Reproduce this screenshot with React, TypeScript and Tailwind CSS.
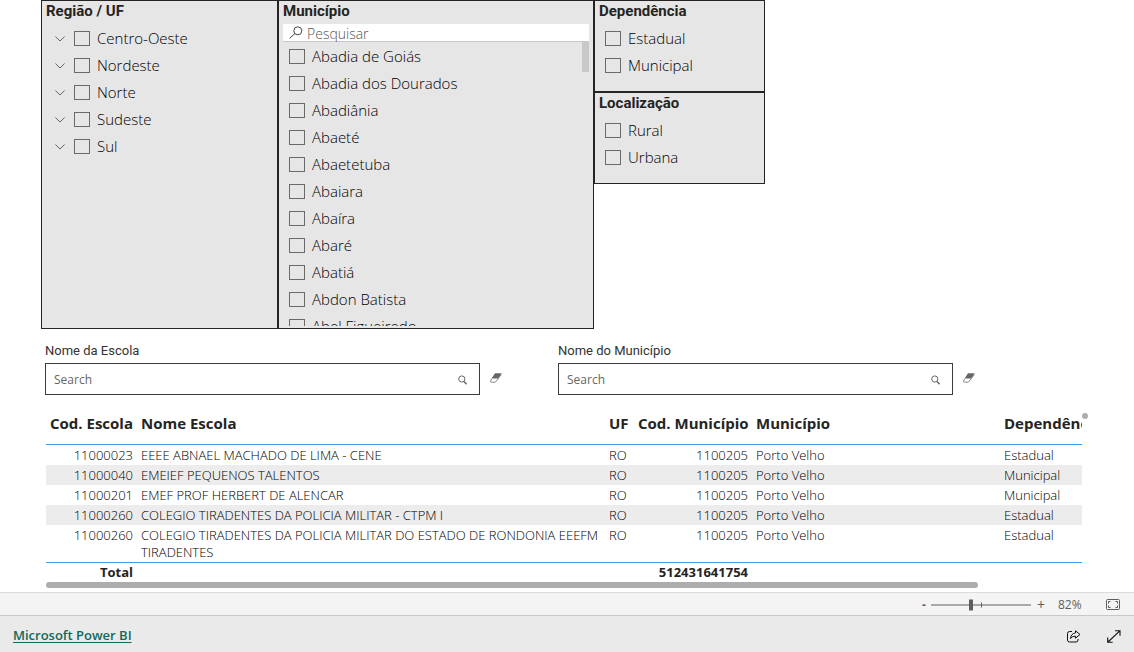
import React, { useState } from "react";

const regions = ["Centro-Oeste", "Nordeste", "Norte", "Sudeste", "Sul"];
const cities = [
  "Abadia de Goiás",
  "Abadia dos Dourados",
  "Abadiânia",
  "Abaeté",
  "Abaetetuba",
  "Abaiara",
  "Abaíra",
  "Abaré",
  "Abatiá",
  "Abdon Batista",
  "Abel Figueiredo",
];

const rows = [
  ["11000023", "EEEE ABNAEL MACHADO DE LIMA - CENE", "RO", "1100205", "Porto Velho", "Estadual"],
  ["11000040", "EMEIEF PEQUENOS TALENTOS", "RO", "1100205", "Porto Velho", "Municipal"],
  ["11000201", "EMEF PROF HERBERT DE ALENCAR", "RO", "1100205", "Porto Velho", "Municipal"],
  ["11000260", "COLEGIO TIRADENTES DA POLICIA MILITAR - CTPM I", "RO", "1100205", "Porto Velho", "Estadual"],
  [
    "11000260",
    "COLEGIO TIRADENTES DA POLICIA MILITAR DO ESTADO DE RONDONIA EEEFM TIRADENTES",
    "RO",
    "1100205",
    "Porto Velho",
    "Estadual",
  ],
];

function Option({ label }: { label: string }) {
  return (
    <label className="flex h-[27px] items-center gap-[7px] text-[15px] font-[350] whitespace-nowrap text-black">
      <input
        type="checkbox"
        className="h-[15px] w-4 shrink-0 appearance-none border border-[#6b6a69] checked:bg-[#252423]"
      />
      <span>{label}</span>
    </label>
  );
}

function Panel({ title, className, children }: { title: string; className: string; children: React.ReactNode }) {
  return (
    <section className={`flex flex-col border border-[#252423] bg-[#e6e6e6] px-1 ${className}`}>
      <h2 className="h-[23px] font-['Roboto',sans-serif] text-[15px] leading-5 font-bold text-[#252423]">{title}</h2>
      {children}
    </section>
  );
}

function SearchBox({ id, label, className }: { id: string; label: string; className: string }) {
  const [value, setValue] = useState("");
  return (
    <div className={className}>
      <label htmlFor={id} className="block h-5 font-['Roboto',sans-serif] text-[13px] leading-4 text-[#333]">
        {label}
      </label>
      <div className="flex items-center gap-2.5">
        <div className="flex h-8 flex-1 items-center border border-[#3c3c3c] pt-px pr-3 pl-2">
          <input
            id={id}
            placeholder="Search"
            value={value}
            onChange={(e) => setValue(e.target.value)}
            className="min-w-0 flex-1 text-xs outline-none placeholder:text-[#666]"
          />
          <button type="button" aria-label={`Search ${label}`}>
            <svg width="9" height="10" viewBox="0 0 9 10" fill="none" stroke="#666" strokeWidth="1">
              <circle cx="3.8" cy="4" r="3.1" />
              <path d="M6 6.4 8.6 9.2" strokeWidth="1.4" />
            </svg>
          </button>
        </div>
        <button type="button" aria-label={`Clear ${label}`} className="pb-0.5">
          <svg width="12" height="10" viewBox="0 0 12 10">
            <path d="M5 .3h6.6L8.2 5.6H1.6z" fill="#666" />
            <path d="M1.6 5.8.6 8.2q-.2 1 .9 1h3.8l2.9-3.4 3.2-4.6" fill="none" stroke="#777" strokeWidth=".9" />
          </svg>
        </button>
      </div>
    </div>
  );
}

export default function App() {
  const [zoom, setZoom] = useState(82);
  return (
    <div className="flex min-h-screen flex-col bg-white font-['Open_Sans',sans-serif] text-[#252423]">
      <main className="flex-1">
        <div className="flex items-start pl-[41px]">
          <Panel title="Região / UF" className="min-h-[329px] w-[237px] self-stretch">
            <ul className="pt-px pl-[9px]">
              {regions.map((r) => (
                <li key={r} className="flex items-center gap-[9px]">
                  <button type="button" aria-label={`Expandir ${r}`}>
                    <svg width="10" height="6" viewBox="0 0 10 6" fill="none" stroke="#666" strokeWidth="1">
                      <path d="M.4.5 5 5 9.6.5" />
                    </svg>
                  </button>
                  <Option label={r} />
                </li>
              ))}
            </ul>
          </Panel>

          <Panel title="Município" className="w-[316px]">
            <div className="flex h-[18px] items-center gap-1 border-b border-[#c8c8c8] bg-white pl-1.5">
              <svg width="14" height="13" viewBox="0 0 14 13" fill="none" stroke="#444" strokeWidth="1">
                <circle cx="8.8" cy="4.8" r="4" />
                <path d="M5.8 7.6.6 12.4" />
              </svg>
              <input
                aria-label="Pesquisar"
                placeholder="Pesquisar"
                className="h-[18px] min-w-0 flex-1 pt-0.5 text-sm leading-4 font-[350] outline-none placeholder:text-[#555]"
              />
            </div>
            <div className="flex items-start pb-0.5">
              <ul className="h-[284px] flex-1 overflow-hidden pt-px pl-1.5">
                {cities.map((c) => (
                  <li key={c}>
                    <Option label={c} />
                  </li>
                ))}
              </ul>
              <div className="h-[30px] w-[7px] bg-[#c8c8c8]" />
            </div>
          </Panel>

          <div className="w-[171px]">
            <Panel title="Dependência" className="min-h-[92px]">
              <div className="pt-px pl-1.5">
                <Option label="Estadual" />
                <Option label="Municipal" />
              </div>
            </Panel>
            <Panel title="Localização" className="min-h-[92px]">
              <div className="pt-px pl-1.5">
                <Option label="Rural" />
                <Option label="Urbana" />
              </div>
            </Panel>
          </div>
        </div>

        <div className="flex gap-14 pt-3.5 pl-[45px]">
          <SearchBox id="escola" label="Nome da Escola" className="w-[457px]" />
          <SearchBox id="municipio" label="Nome do Município" className="w-[417px]" />
        </div>

        <div className="relative mt-2 mr-[52px] ml-[46px]">
          <div className="overflow-hidden">
            <table className="w-[1120px] table-fixed border-collapse text-[13px] leading-[17px]">
              <colgroup>
                <col className="w-[91px]" />
                <col className="w-[468px]" />
                <col className="w-[29px]" />
                <col className="w-[118px]" />
                <col className="w-[248px]" />
                <col className="w-[166px]" />
              </colgroup>
              <thead>
                <tr className="h-[41px] border-b border-[#3d9be9] text-left text-[15px] whitespace-nowrap">
                  <th className="px-1 text-right font-bold">Cod. Escola</th>
                  <th className="px-1 font-bold">Nome Escola</th>
                  <th className="px-1 font-bold">UF</th>
                  <th className="px-1 text-right font-bold">Cod. Município</th>
                  <th className="px-1 font-bold">Município</th>
                  <th className="px-1 font-bold">Dependência</th>
                </tr>
              </thead>
              <tbody className="font-[350] text-black">
                {rows.map((r, i) => (
                  <tr key={i} className="align-top even:bg-[#ececec]">
                    {r.map((c, j) => (
                      <td key={j} className={`pt-0.5 pb-px pl-1 ${j === 1 ? "" : "pr-1"} ${j === 0 || j === 3 ? "text-right" : ""}`}>
                        {c}
                      </td>
                    ))}
                  </tr>
                ))}
              </tbody>
              <tfoot>
                <tr className="border-t border-[#3d9be9] font-bold">
                  <td className="px-1 py-px text-right">Total</td>
                  <td />
                  <td />
                  <td className="px-1 py-px text-right">512431641754</td>
                  <td />
                  <td />
                </tr>
              </tfoot>
            </table>
          </div>
          <div className="h-1.5 w-[90%] rounded-full bg-[#adadad]" />
          <div className="absolute top-2.5 -right-1.5 size-1.5 rounded-full bg-[#adadad]" />
        </div>
      </main>

      <div className="flex h-[23px] items-center justify-end border-t border-[#dcdcdc] bg-[#f4f4f4] pt-px pr-3.5 text-xs text-[#605e5c]">
        <button type="button" aria-label="Diminuir zoom" className="w-3 text-left font-bold" onClick={() => setZoom(zoom - 1)}>
          -
        </button>
        <svg width="100" height="12" viewBox="0 0 100 12" fill="#605e5c" className="ml-[-3px]">
          <path d="M0 5.5h100v1H0zM38 .5h4v11h-4zM50 3.5h1v5h-1z" />
        </svg>
        <button type="button" aria-label="Aumentar zoom" className="w-5 text-center text-sm" onClick={() => setZoom(zoom + 1)}>
          +
        </button>
        <span className="ml-[7px] w-12">{zoom}%</span>
        <button type="button" aria-label="Ajustar à página">
          <svg width="14" height="11" viewBox="0 0 14 11" fill="none" stroke="#605e5c">
            <rect x=".5" y=".5" width="13" height="10" rx="1" />
            <path d="M4.5 2.5h-2v2M9.5 2.5h2v2M2.5 6.5v2h2M11.5 6.5v2h-2" />
          </svg>
        </button>
      </div>

      <footer className="flex h-[37px] items-center justify-between border-t border-[#c8c8c8] bg-[#eaeaea] pt-1 pr-[13px] pl-[13px]">
        <a href="#powerbi" className="text-[13px] font-semibold text-[#11695a] underline underline-offset-2">
          Microsoft Power BI
        </a>
        <div className="flex items-center gap-[26px]">
          <button type="button" aria-label="Compartilhar">
            <svg width="14" height="13" viewBox="0 0 14 13" fill="none" stroke="#111" strokeLinejoin="round">
              <path d="M5 1.5H2.5a2 2 0 0 0-2 2v6.5a2 2 0 0 0 2 2H9a2 2 0 0 0 2-2V9" />
              <path d="M8.5.8 13 4.5 8.5 8.2V6.2Q5.2 6 3.5 8.5 4 3.5 8.5 2.9z" />
            </svg>
          </button>
          <button type="button" aria-label="Tela cheia">
            <svg width="14" height="13" viewBox="0 0 14 13" fill="none" stroke="#111" strokeWidth="1.1">
              <path d="M1 12 12.8.8M8 .7h5v5M.7 7.5v4.8h5" />
            </svg>
          </button>
        </div>
      </footer>
    </div>
  );
}
